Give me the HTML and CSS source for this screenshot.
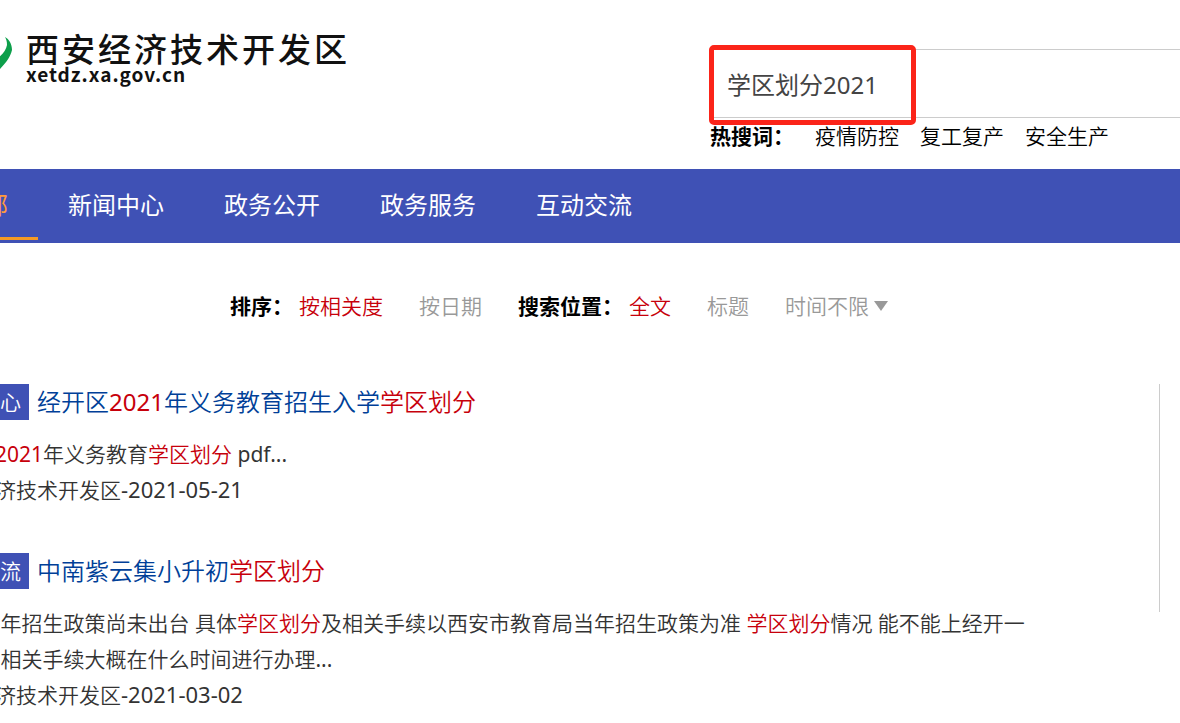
FILE: index.html
```html
<!DOCTYPE html>
<html lang="zh-CN">
<head>
    <meta charset="UTF-8">
    <meta name="viewport" content="width=device-width, initial-scale=1.0">
    <title>西安经济技术开发区 - 搜索</title>
    <link rel="stylesheet" href="styles.css">
</head>
<body>

<div class="page">
    <header class="header">
        <a class="logo" href="#">
            <svg class="logo-mark" width="84" height="44" viewBox="0 0 84 44" aria-hidden="true">
                <path d="M75 1 C79 3 82 8 82 14 C80 22 76 27 66 37 L66 23 C72 20 76 14 77 9 C77 5 76 3 75 1 Z" fill="#0d9f4b"/>
            </svg>
            <span class="logo-text">
                <span class="logo-name">西安经济技术开发区</span>
                <span class="logo-domain">xetdz.xa.gov.cn</span>
            </span>
        </a>

        <div class="search">
            <form class="search-form">
                <input type="text" class="search-input" aria-label="搜索" value="学区划分2021">
                <span class="search-mark"></span>
            </form>
            <div class="hot">
                <strong>热搜词：</strong>
                <a href="#">疫情防控</a>
                <a href="#">复工复产</a>
                <a href="#">安全生产</a>
            </div>
        </div>
    </header>

    <nav class="nav">
        <a class="active" href="#">全部</a>
        <a href="#">新闻中心</a>
        <a href="#">政务公开</a>
        <a href="#">政务服务</a>
        <a href="#">互动交流</a>
    </nav>

    <div class="filter">
        <div class="filter-group">
            <strong>排序：</strong>
            <div class="filter-options">
                <a class="on" href="#">按相关度</a>
                <a href="#">按日期</a>
            </div>
        </div>
        <div class="filter-group">
            <strong>搜索位置：</strong>
            <div class="filter-options">
                <a class="on" href="#">全文</a>
                <a href="#">标题</a>
            </div>
        </div>
        <div class="time">
            <select class="time-select" aria-label="时间">
                <option>时间不限</option>
            </select>
            <svg width="14" height="10" viewBox="0 0 14 10" aria-hidden="true">
                <path d="M0 0 H14 L7 10 Z" fill="#999"/>
            </svg>
        </div>
    </div>

    <div class="content">
        <main class="results">
            <article class="result">
                <h3 class="result-title">
                    <span class="tag">新闻中心</span>
                    <a href="#">经开区<em class="latin">2021</em>年义务教育招生入学<em>学区划分</em></a>
                </h3>
                <p>经开区<em class="latin">2021</em>年义务教育<em>学区划分</em><span class="latin"> pdf...</span></p>
                <p>西安经济技术开发区<span class="latin date">-2021-05-21</span></p>
            </article>

            <article class="result">
                <h3 class="result-title">
                    <span class="tag">互动交流</span>
                    <a href="#">中南紫云集小升初<em>学区划分</em></a>
                </h3>
                <p>您好 今年招生政策尚未出台 具体<em>学区划分</em>及相关手续以西安市教育局当年招生政策为准 <em>学区划分</em>情况 能不能上经开一小 以及相关手续大概在什么时间进行办理<span class="latin">...</span></p>
                <p>西安经济技术开发区<span class="latin date">-2021-03-02</span></p>
            </article>
        </main>
        <aside class="side"></aside>
    </div>
</div>

</body>
</html>
```

FILE: styles.css
```css
body {
    margin: 0;
    padding: 0;
    background: #fff;
    color: #333;
    font-family: "Noto Sans", "Noto Sans CJK SC", sans-serif;
    font-size: 21px;
    font-weight: 350;
    line-height: 36px;
    overflow: hidden;
}

a {
    color: inherit;
    text-decoration: none;
}

em {
    color: #c7000b;
    font-style: normal;
}

strong {
    color: #000;
    font-weight: 700;
}

/* Digits and latin letters need the regular weight */
.latin {
    font-weight: 400;
}

/* The page starts to the left of the window */
.page {
    margin-left: -70px;
}

.header {
    display: flex;
    justify-content: space-between;
    height: 169px;
}

.logo {
    display: flex;
    align-items: flex-start;
    gap: 12px;
    padding-top: 36px;
    color: #111;
}

.logo-text {
    display: flex;
    flex-direction: column;
}

.logo-name {
    font-size: 33px;
    font-weight: 500;
    line-height: 28px;
    letter-spacing: 3px;
}

.logo-domain {
    font-family: "Noto Sans CJK SC", sans-serif;
    font-size: 19px;
    font-weight: 700;
    line-height: 20px;
    letter-spacing: 1px;
}

.search {
    width: 470px;
    padding-top: 49px;
}

.search-form {
    position: relative;
}

.search-input {
    display: block;
    box-sizing: border-box;
    width: 100%;
    height: 69px;
    padding: 0 16px;
    border: 1px solid #ccc;
    border-right: none;
    background: #fff;
    color: #444;
    font: inherit;
    font-size: 24px;
    font-weight: 400;
}

/* Red frame over the search words */
.search-mark {
    position: absolute;
    top: -4px;
    left: -1px;
    box-sizing: border-box;
    width: 207px;
    height: 80px;
    border: 5px solid #fb2419;
    border-radius: 5px;
    pointer-events: none;
}

.hot {
    display: flex;
    gap: 21px;
    color: #000;
}

.nav {
    display: flex;
    height: 74px;
    background: #3f51b5;
    color: #fff;
    font-size: 24px;
    font-weight: 400;
    line-height: 71px;
}

.nav a {
    box-sizing: border-box;
    height: 71px;
    padding: 0 30px;
}

.nav .active {
    border-bottom: 3px solid #f49a25;
    color: #ff9a3c;
}

.filter {
    display: flex;
    gap: 36px;
    padding: 45px 0 0 300px;
    color: #999;
}

.filter-group {
    display: flex;
    gap: 6px;
}

.filter-options {
    display: flex;
    gap: 36px;
}

.filter .on {
    color: #c7000b;
}

.time {
    display: flex;
    align-items: center;
    gap: 5px;
}

.time-select {
    appearance: none;
    padding: 0;
    border: none;
    background: none;
    color: inherit;
    font: inherit;
}

.content {
    display: flex;
    align-items: flex-start;
    padding-top: 60px;
}

.results {
    flex: 1;
    padding-right: 120px;
}

.result {
    margin-bottom: 45px;
}

.result-title {
    display: flex;
    gap: 8px;
    margin: 0 0 16px;
    color: #003f98;
    font-size: 24px;
    font-weight: inherit;
}

.tag {
    padding: 0 8px 0 7px;
    background: #3f51b5;
    color: #fff;
    font-size: 21px;
}

.result p {
    margin: 0;
    padding-left: 2px;
}

.date {
    font-size: 22px;
    line-height: 1;
}

.side {
    width: 20px;
    min-height: 228px;
    border-left: 1px solid #ccc;
}
```
